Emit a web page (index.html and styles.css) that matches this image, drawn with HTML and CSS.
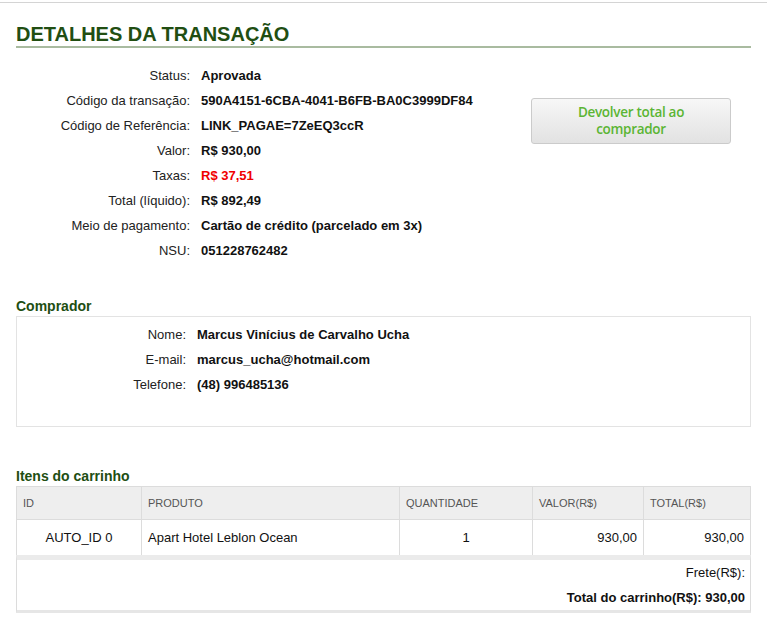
FILE: index.html
```html
<!DOCTYPE html>
<html lang="pt-BR">
<head>
<meta charset="utf-8">
<title>Detalhes da transação</title>
<link rel="stylesheet" href="styles.css">
</head>
<body>
<div class="page">
  <h1 class="title">DETALHES DA TRANSAÇÃO</h1>

  <div class="summary">
    <dl class="fields">
      <dt>Status:</dt><dd>Aprovada</dd>
      <dt>Código da transação:</dt><dd>590A4151-6CBA-4041-B6FB-BA0C3999DF84</dd>
      <dt>Código de Referência:</dt><dd>LINK_PAGAE=7ZeEQ3ccR</dd>
      <dt>Valor:</dt><dd>R$ 930,00</dd>
      <dt>Taxas:</dt><dd class="neg">R$ 37,51</dd>
      <dt>Total (líquido):</dt><dd>R$ 892,49</dd>
      <dt>Meio de pagamento:</dt><dd>Cartão de crédito (parcelado em 3x)</dd>
      <dt>NSU:</dt><dd>051228762482</dd>
    </dl>
    <button class="refund" type="button"><span class="refund-line">Devolver total ao</span><span class="refund-line">comprador</span></button>
  </div>

  <h2 class="section">Comprador</h2>
  <div class="box">
    <dl class="fields buyer">
      <dt>Nome:</dt><dd>Marcus Vinícius de Carvalho Ucha</dd>
      <dt>E-mail:</dt><dd>marcus_ucha@hotmail.com</dd>
      <dt>Telefone:</dt><dd>(48) 996485136</dd>
    </dl>
  </div>

  <h2 class="section cart-title">Itens do carrinho</h2>
  <table class="cart">
    <colgroup>
      <col class="c-id"><col class="c-prod"><col class="c-qty"><col class="c-val"><col class="c-tot">
    </colgroup>
    <thead>
      <tr><th>ID</th><th>PRODUTO</th><th>QUANTIDADE</th><th>VALOR(R$)</th><th>TOTAL(R$)</th></tr>
    </thead>
    <tbody>
      <tr><td class="center">AUTO_ID 0</td><td>Apart Hotel Leblon Ocean</td><td class="center">1</td><td class="right">930,00</td><td class="right">930,00</td></tr>
    </tbody>
  </table>
  <div class="totals">
    <div class="frete">Frete(R$):</div>
    <div class="grand">Total do carrinho(R$): 930,00</div>
  </div>
</div>
</body>
</html>
```

FILE: styles.css
```css
html, body {
  margin: 0;
  padding: 0;
  background: #ffffff;
}

body {
  font-family: "Liberation Sans", Arial, sans-serif;
  font-size: 13px;
  color: #111;
  padding-top: 2px;
}

.page {
  border-top: 1px solid #d4d4d4;
  padding: 0 16px 20px;
}

.title {
  margin: 19px 0 0;
  font-size: 20px;
  line-height: 24px;
  font-weight: bold;
  color: #214e12;
  border-bottom: 2px solid #a9bba0;
}

.summary {
  display: flex;
  justify-content: space-between;
  align-items: flex-start;
  margin-top: 15px;
}

.fields {
  display: grid;
  grid-template-columns: 174px auto;
  column-gap: 11px;
  margin: 0;
  line-height: 25px;
}

.fields dt {
  text-align: right;
  color: #222;
}

.fields dd {
  margin: 0;
  font-weight: bold;
  color: #111;
}

.fields dd.neg {
  color: #f00000;
}

.refund {
  display: flex;
  flex-direction: column;
  align-items: center;
  justify-content: center;
  margin: 35px 20px 0 0;
  width: 200px;
  height: 46px;
  padding: 0;
  border: 1px solid #cbcbcb;
  border-radius: 3px;
  background: linear-gradient(#f7f7f7, #e2e2e2);
  font-family: "Open Sans", "Noto Sans", sans-serif;
  font-size: 13.5px;
  font-weight: 600;
  letter-spacing: -0.3px;
  color: #5bb534;
}

.refund-line {
  display: block;
  height: 17px;
  line-height: 17px;
  overflow: visible;
}

.section {
  margin: 35px 0 2px;
  font-size: 14px;
  line-height: 16px;
  font-weight: bold;
  color: #214e12;
}

.box {
  border: 1px solid #e3e3e3;
  padding: 5px 0 29px;
}

.buyer {
  grid-template-columns: 169px auto;
}

.cart-title {
  margin-top: 41px;
}

.cart {
  width: 100%;
  border-collapse: collapse;
  table-layout: fixed;
}

.c-id { width: 125px; }
.c-prod { width: 258px; }
.c-qty { width: 133px; }
.c-val { width: 111px; }
.c-tot { width: auto; }

.cart th {
  height: 32px;
  padding: 0 6px;
  background: #eeeeee;
  border: 1px solid #dcdcdc;
  font-size: 11px;
  font-weight: normal;
  color: #555;
  text-align: left;
}

.cart td {
  height: 35px;
  padding: 0 6px;
  border: 1px solid #dcdcdc;
  border-bottom: none;
  color: #111;
}

.cart td.center { text-align: center; }
.cart td.right { text-align: right; }

.totals {
  border-left: 1px solid #dcdcdc;
  border-right: 1px solid #dcdcdc;
  border-top: 5px solid #ebebeb;
  border-bottom: 3px solid #e6e6e6;
  text-align: right;
  padding-right: 5px;
  line-height: 25px;
}

.grand {
  font-weight: bold;
}
```
